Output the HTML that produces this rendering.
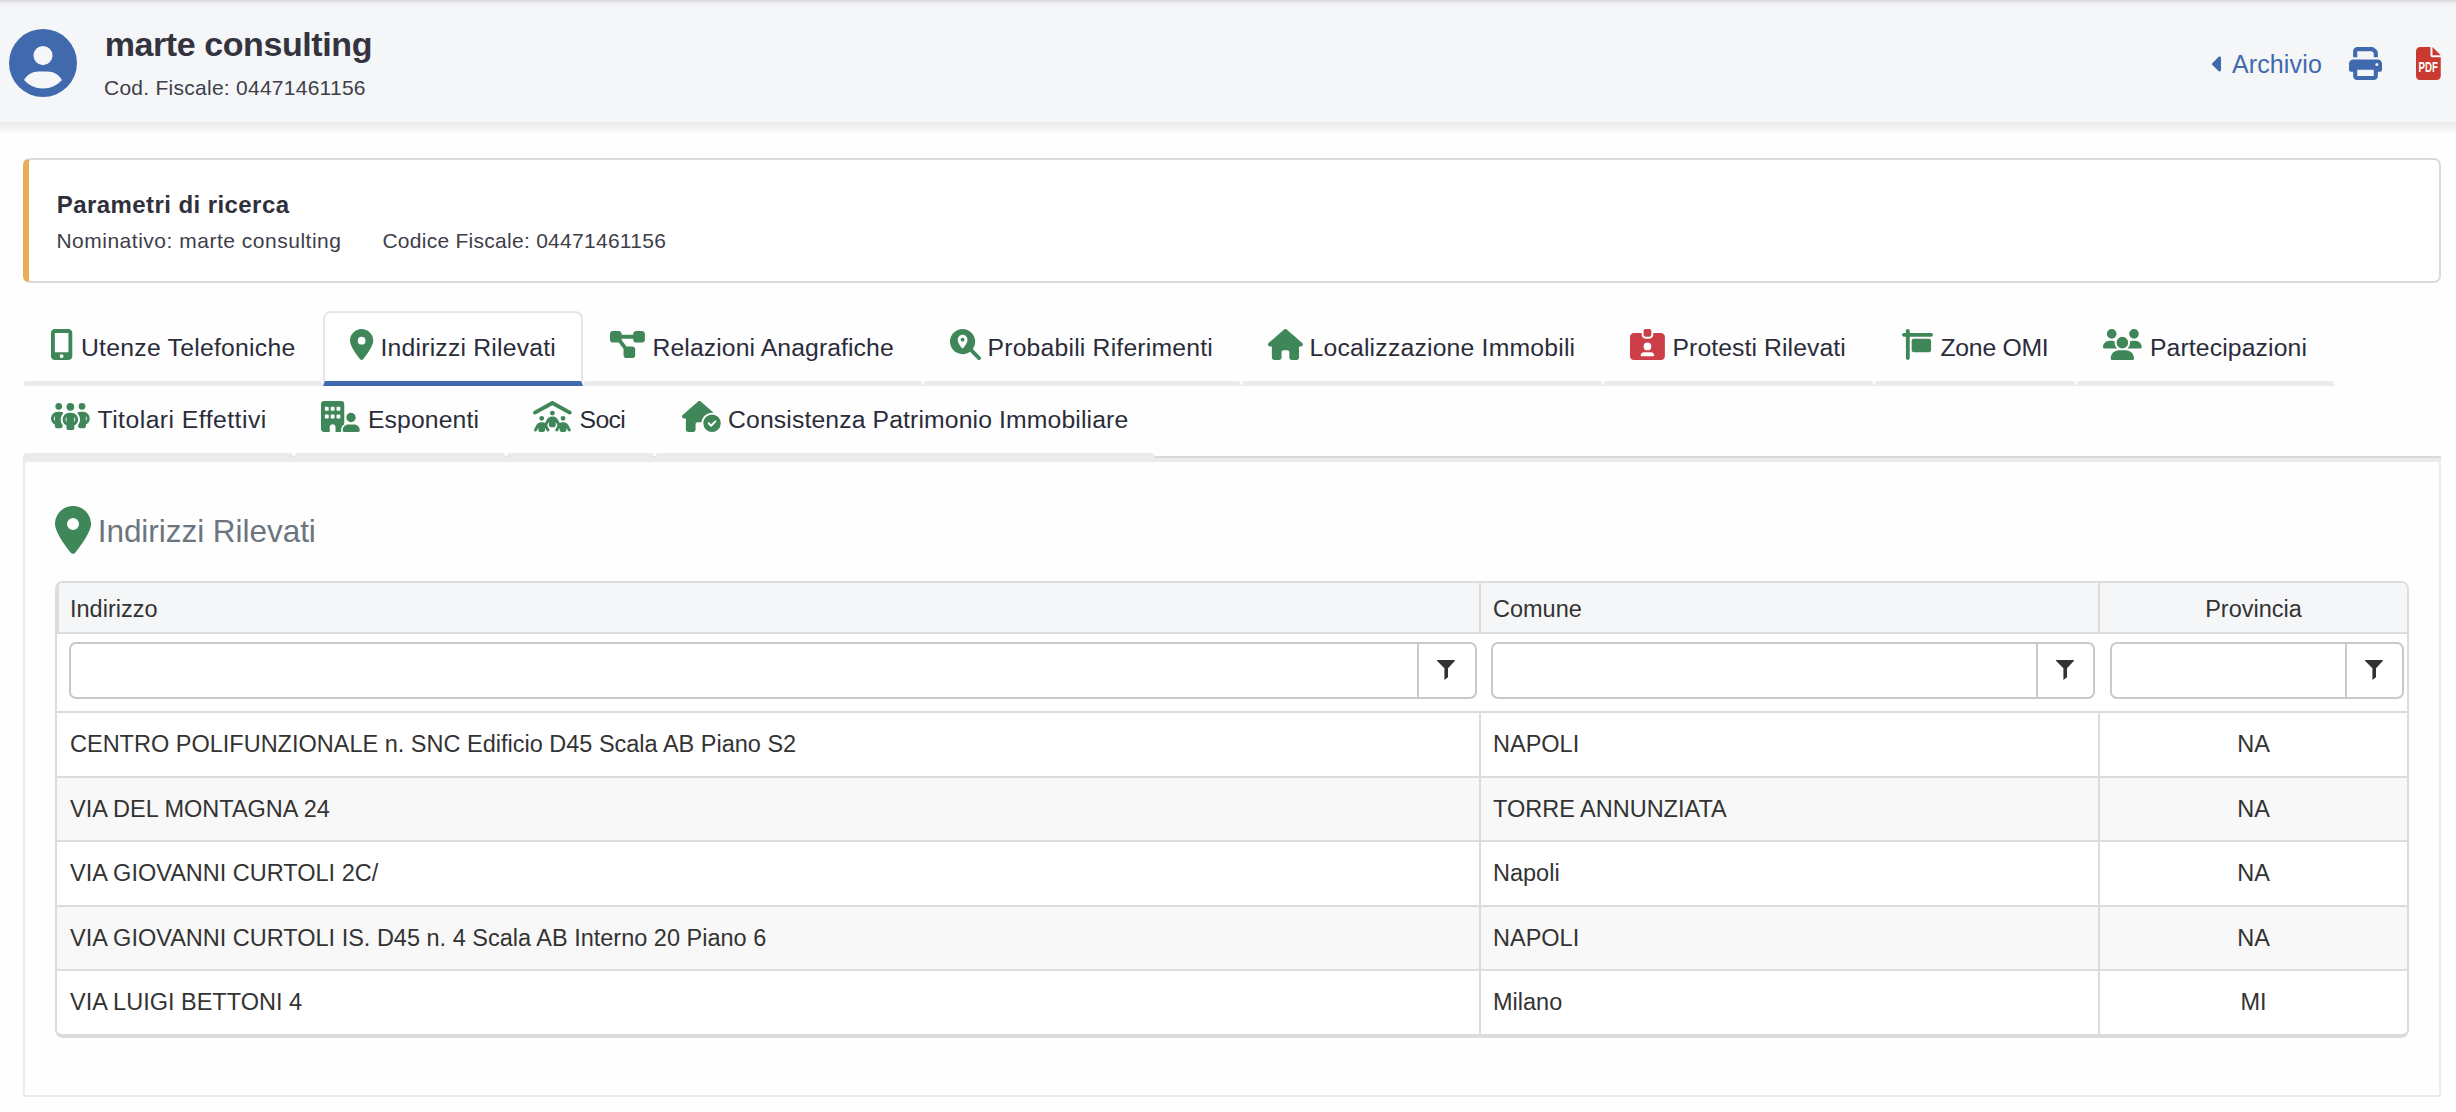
<!DOCTYPE html>
<html><head><meta charset="utf-8"><title>Indirizzi Rilevati</title><style>
*{margin:0;padding:0;box-sizing:border-box}
html,body{width:2456px;height:1112px;overflow:hidden;background:#fefefe;font-family:"Liberation Sans",sans-serif}
.abs,.t,.ic,.hdr,.hdrsh,.card,.tab,.panel,.tbl,.inp{position:absolute}
.t{white-space:nowrap}
.ic{display:block;overflow:visible}
.hdr{left:0;top:0;width:2456px;height:122px;background:linear-gradient(#d7d7d9 0px,#e6e7ea 2px,#eff0f2 4px,#f5f6f8 7px,#f5f6f8 100%)}
.hdrsh{left:0;top:122px;width:2456px;height:12px;background:linear-gradient(#e8e8ea,rgba(253,253,253,0))}
.card{left:23px;top:158px;width:2418px;height:125px;background:#fff;border:2px solid #dadada;border-left:6px solid #e8ad56;border-radius:7px}
.tab{border-bottom:5px solid #ebebeb;border-left:2px solid transparent;border-right:2px solid transparent}
.tab.act{border:2px solid #e6e6e6;border-bottom:5px solid #4169ad;border-radius:8px 8px 0 0;background:#fff}
.panel{left:23px;top:458px;width:2418px;height:639px;border:2px solid #ebebeb;border-top:4px solid #ebebeb}
.tbl{left:55px;top:581px;width:2354px;height:457px;border:2px solid #dcdcdc;border-bottom-width:4px;border-radius:8px;background:#fff}
.inp{border:2px solid #c9c9c9;border-radius:7px;background:#fff}
</style></head>
<body>
<div class="hdr"></div><div class="hdrsh"></div>
<svg class="ic" style="left:9.00px;top:29.00px;width:68.00px;height:68px" viewBox="0 0 512 512"><path fill="#4169ad" d="M399 384.2C376.9 345.8 335.4 320 288 320H224c-47.4 0-88.9 25.8-111 64.2c35.2 39.2 86.2 63.8 143 63.8s107.8-24.7 143-63.8zM0 256a256 256 0 1 1 512 0A256 256 0 1 1 0 256zm256 16a72 72 0 1 0 0-144 72 72 0 1 0 0 144z"/></svg>
<div id="title" class="t " style="left:104.7px;top:27.22px;font-size:34px;line-height:34px;color:#33343f;font-weight:700;letter-spacing:-0.413px;">marte consulting</div>
<div id="cod" class="t " style="left:104.0px;top:77.22px;font-size:21px;line-height:21px;color:#3d3e49;letter-spacing:0.26px;">Cod. Fiscale: 04471461156</div>
<svg class="ic" style="left:2212.00px;top:52.00px;width:12.00px;height:24px" viewBox="0 0 256 512"><path fill="#4169ad" d="M9.4 278.6c-12.5-12.5-12.5-32.8 0-45.3l128-128c9.2-9.2 22.9-11.9 34.9-6.9s19.8 16.6 19.8 29.6l0 256c0 12.9-7.8 24.6-19.8 29.6s-25.7 2.2-34.9-6.9l-128-128z"/></svg>
<div id="arch" class="t " style="left:2231.9px;top:51.84px;font-size:25px;line-height:25px;color:#4169ad;letter-spacing:0.143px;">Archivio</div>
<svg class="ic" style="left:2349.00px;top:47.00px;width:33.00px;height:33px" viewBox="0 0 512 512"><path fill="#4169ad" d="M128 0C92.7 0 64 28.7 64 64v96h64V64H354.7L384 93.3V160h64V93.3c0-17-6.7-33.3-18.7-45.3L400 18.7C388 6.7 371.7 0 354.7 0H128zM384 352v32 64H128V384 368 352H384zm64 32h32c17.7 0 32-14.3 32-32V256c0-35.3-28.7-64-64-64H64c-35.3 0-64 28.7-64 64v96c0 17.7 14.3 32 32 32H64v64c0 35.3 28.7 64 64 64H384c35.3 0 64-28.7 64-64V384zM432 248a24 24 0 1 1 0 48 24 24 0 1 1 0-48z"/></svg>
<svg class="ic" style="left:2416px;top:47px;width:24.75px;height:33px" viewBox="0 0 384 512"><path fill="#c9392f" d="M0 64C0 28.7 28.7 0 64 0H224V128c0 17.7 14.3 32 32 32H384V448c0 35.3-28.7 64-64 64H64c-35.3 0-64-28.7-64-64V64zm384 64H256V0L384 128z"/><text x="190" y="382" fill="#fff" font-family="Liberation Sans" font-weight="700" font-size="225" text-anchor="middle" textLength="300" lengthAdjust="spacingAndGlyphs">PDF</text></svg>
<div class="card"></div>
<div id="param" class="t " style="left:56.7px;top:192.68px;font-size:24px;line-height:24px;color:#2f303c;font-weight:700;letter-spacing:0.431px;">Parametri di ricerca</div>
<div id="nomin" class="t " style="left:56.4px;top:230.22px;font-size:21px;line-height:21px;color:#3d3e49;letter-spacing:0.51px;">Nominativo: marte consulting</div>
<div id="codice" class="t " style="left:382.4px;top:230.22px;font-size:21px;line-height:21px;color:#3d3e49;letter-spacing:0.274px;">Codice Fiscale: 04471461156</div>
<div class="abs" style="left:23px;top:456px;width:2418px;height:2px;background:#d9d9d9"></div>
<div class="tab" style="left:23px;top:311px;width:300px;height:75px"></div>
<svg class="ic" style="left:50.43px;top:329.00px;width:23.25px;height:31px" viewBox="0 0 384 512"><path fill="#3f8659" d="M16 64C16 28.7 44.7 0 80 0H304c35.3 0 64 28.7 64 64V448c0 35.3-28.7 64-64 64H80c-35.3 0-64-28.7-64-64V64zM224 448a32 32 0 1 0 -64 0 32 32 0 1 0 64 0zM304 64H80V384H304V64z"/></svg>
<div id="tab1_0" class="t " style="left:81.0px;top:335.95px;font-size:24.75px;line-height:24.75px;color:#2b2c3a;letter-spacing:0.246px;">Utenze Telefoniche</div>
<div class="tab act" style="left:323px;top:311px;width:260px;height:75px"></div>
<svg class="ic" style="left:350.20px;top:329.00px;width:23.25px;height:31px" viewBox="0 0 384 512"><path fill="#3f8659" d="M215.7 499.2C267 435 384 279.4 384 192C384 86 298 0 192 0S0 86 0 192c0 87.4 117 243 168.3 307.2c12.3 15.3 35.1 15.3 47.4 0zM192 128a64 64 0 1 1 0 128 64 64 0 1 1 0-128z"/></svg>
<div id="tab1_1" class="t " style="left:380.5px;top:335.95px;font-size:24.75px;line-height:24.75px;color:#2b2c3a;letter-spacing:0.199px;">Indirizzi Rilevati</div>
<div class="tab" style="left:583px;top:311px;width:340px;height:75px"></div>
<svg class="ic" style="left:610.40px;top:329.00px;width:34.88px;height:31px" viewBox="0 0 576 512"><path fill="#3f8659" d="M0 80C0 53.5 21.5 32 48 32h96c26.5 0 48 21.5 48 48V96H384V80c0-26.5 21.5-48 48-48h96c26.5 0 48 21.5 48 48v96c0 26.5-21.5 48-48 48H432c-26.5 0-48-21.5-48-48V160H192v16c0 1.7-.1 3.4-.3 5L272 288h96c26.5 0 48 21.5 48 48v96c0 26.5-21.5 48-48 48H272c-26.5 0-48-21.5-48-48V336c0-1.7 .1-3.4 .3-5L144 224H48c-26.5 0-48-21.5-48-48V80z"/></svg>
<div id="tab1_2" class="t " style="left:652.5px;top:335.95px;font-size:24.75px;line-height:24.75px;color:#2b2c3a;letter-spacing:0.09px;">Relazioni Anagrafiche</div>
<div class="tab" style="left:923px;top:311px;width:318px;height:75px"></div>
<svg class="ic" style="left:950.00px;top:329.00px;width:31.00px;height:31px" viewBox="0 0 512 512"><path fill="#3f8659" d="M416 208c0 45.9-14.9 88.3-40 122.7L502.6 457.4c12.5 12.5 12.5 32.8 0 45.3s-32.8 12.5-45.3 0L330.7 376c-34.4 25.2-76.8 40-122.7 40C93.1 416 0 322.9 0 208S93.1 0 208 0S416 93.1 416 208zM288 176c0-44.2-35.8-80-80-80s-80 35.8-80 80c0 48.8 46.5 111.6 68.6 138.6c6 7.3 16.8 7.3 22.7 0c22.1-27 68.6-89.8 68.6-138.6zm-112 0a32 32 0 1 1 64 0 32 32 0 1 1 -64 0z"/></svg>
<div id="tab1_3" class="t " style="left:987.5px;top:335.95px;font-size:24.75px;line-height:24.75px;color:#2b2c3a;letter-spacing:0.19px;">Probabili Riferimenti</div>
<div class="tab" style="left:1241px;top:311px;width:362px;height:75px"></div>
<svg class="ic" style="left:1268.00px;top:329.00px;width:34.88px;height:31px" viewBox="0 0 576 512"><path fill="#3f8659" d="M575.8 255.5c0 18-15 32.1-32 32.1h-32l.7 160.2c0 2.7-.2 5.4-.5 8.1V472c0 22.1-17.9 40-40 40H456c-1.1 0-2.2 0-3.3-.1c-1.4 .1-2.8 .1-4.2 .1H416 392c-22.1 0-40-17.9-40-40V448 384c0-17.7-14.3-32-32-32H256c-17.7 0-32 14.3-32 32v64 24c0 22.1-17.9 40-40 40H160 128.1c-1.5 0-3-.1-4.5-.2c-1.2 .1-2.4 .2-3.6 .2H104c-22.1 0-40-17.9-40-40V360c0-.9 0-1.9 .1-2.8V287.6H32c-18 0-32-14-32-32.1c0-9 3-17 10-24L266.4 8c7-7 15-8 22-8s15 2 21 7L564.8 231.5c8 7 12 15 11 24z"/></svg>
<div id="tab1_4" class="t " style="left:1309.5px;top:335.95px;font-size:24.75px;line-height:24.75px;color:#2b2c3a;letter-spacing:0.191px;">Localizzazione Immobili</div>
<div class="tab" style="left:1603px;top:311px;width:271px;height:75px"></div>
<svg class="ic" style="left:1630.40px;top:329.00px;width:34.88px;height:31px" viewBox="0 0 576 512"><path fill="#cd3f48" d="M256 0h64c17.7 0 32 14.3 32 32V96c0 17.7-14.3 32-32 32H256c-17.7 0-32-14.3-32-32V32c0-17.7 14.3-32 32-32zM64 64H192V96c0 35.3 28.7 64 64 64h64c35.3 0 64-28.7 64-64V64H512c35.3 0 64 28.7 64 64V448c0 35.3-28.7 64-64 64H64c-35.3 0-64-28.7-64-64V128C0 92.7 28.7 64 64 64zM176 437.3c0 5.9 4.8 10.7 10.7 10.7H389.3c5.9 0 10.7-4.8 10.7-10.7c0-29.5-23.9-53.3-53.3-53.3H229.3c-29.5 0-53.3 23.9-53.3 53.3zM288 352a64 64 0 1 0 0-128 64 64 0 1 0 0 128z"/></svg>
<div id="tab1_5" class="t " style="left:1672.5px;top:335.95px;font-size:24.75px;line-height:24.75px;color:#2b2c3a;letter-spacing:0.087px;">Protesti Rilevati</div>
<div class="tab" style="left:1874px;top:311px;width:202px;height:75px"></div>
<svg class="ic" style="left:1901.60px;top:329.00px;width:31.00px;height:31px" viewBox="0 0 512 512"><path fill="#3f8659" d="M96 0c17.7 0 32 14.3 32 32V64l352 0c17.7 0 32 14.3 32 32s-14.3 32-32 32l-352 0V480c0 17.7-14.3 32-32 32s-32-14.3-32-32V128H32C14.3 128 0 113.7 0 96S14.3 64 32 64H64V32C64 14.3 78.3 0 96 0zm96 160H448c17.7 0 32 14.3 32 32V352c0 17.7-14.3 32-32 32H192c-17.7 0-32-14.3-32-32V192c0-17.7 14.3-32 32-32z"/></svg>
<div id="tab1_6" class="t " style="left:1940.5px;top:335.95px;font-size:24.75px;line-height:24.75px;color:#2b2c3a;letter-spacing:-0.257px;">Zone OMI</div>
<div class="tab" style="left:2076px;top:311px;width:259px;height:75px"></div>
<svg class="ic" style="left:2103.40px;top:329.00px;width:38.75px;height:31px" viewBox="0 0 640 512"><path fill="#3f8659" d="M144 0a80 80 0 1 1 0 160A80 80 0 1 1 144 0zM512 0a80 80 0 1 1 0 160A80 80 0 1 1 512 0zM0 298.7C0 239.8 47.8 192 106.7 192h42.7c15.9 0 31 3.5 44.6 9.7c-1.3 7.2-1.9 14.7-1.9 22.3c0 38.2 16.8 72.5 43.3 96c-.2 0-.4 0-.7 0H21.3C9.6 320 0 310.4 0 298.7zM405.3 320c-.2 0-.4 0-.7 0c26.6-23.5 43.3-57.8 43.3-96c0-7.6-.7-15-1.9-22.3c13.6-6.3 28.7-9.7 44.6-9.7h42.7C592.2 192 640 239.8 640 298.7c0 11.8-9.6 21.3-21.3 21.3H405.3zM224 224a96 96 0 1 1 192 0 96 96 0 1 1 -192 0zM128 485.3C128 411.7 187.7 352 261.3 352H378.7C452.3 352 512 411.7 512 485.3c0 14.7-11.9 26.7-26.7 26.7H154.7c-14.7 0-26.7-11.9-26.7-26.7z"/></svg>
<div id="tab1_7" class="t " style="left:2150.0px;top:335.95px;font-size:24.75px;line-height:24.75px;color:#2b2c3a;letter-spacing:0.109px;">Partecipazioni</div>
<div class="tab" style="left:23px;top:386px;width:271px;height:72px"></div>
<svg class="ic" style="left:50.50px;top:401.00px;width:38.75px;height:31px" viewBox="0 0 640 512"><path fill="#3f8659" d="M72 88a56 56 0 1 1 112 0A56 56 0 1 1 72 88zM64 245.7C54 256.9 48 271.8 48 288s6 31.1 16 42.3V245.7zm144.4-49.3C178.7 222.7 160 261.2 160 304c0 34.3 12 65.8 32 90.5V416c0 17.7-14.3 32-32 32H96c-17.7 0-32-14.3-32-32V389.2C26.2 371.2 0 332.7 0 288c0-61.9 50.1-112 112-112h32c24 0 46.2 7.5 64.4 20.3zM448 416V394.5c20-24.7 32-56.2 32-90.5c0-42.8-18.7-81.3-48.4-107.7C449.8 183.5 472 176 496 176h32c61.9 0 112 50.1 112 112c0 44.7-26.2 83.2-64 101.2V416c0 17.7-14.3 32-32 32H480c-17.7 0-32-14.3-32-32zm8-328a56 56 0 1 1 112 0A56 56 0 1 1 456 88zM576 245.7v84.7c10-11.3 16-26.1 16-42.3s-6-31.1-16-42.3zM320 32a64 64 0 1 1 0 128 64 64 0 1 1 0-128zM240 304c0 16.2 6 31 16 42.3V261.7c-10 11.3-16 26.1-16 42.3zm144-42.3v84.7c10-11.3 16-26.1 16-42.3s-6-31.1-16-42.3zM448 304c0 44.7-26.2 83.2-64 101.2V448c0 17.7-14.3 32-32 32H288c-17.7 0-32-14.3-32-32V405.2c-37.8-18-64-56.5-64-101.2c0-61.9 50.1-112 112-112h32c61.9 0 112 50.1 112 112z"/></svg>
<div id="tab2_0" class="t " style="left:97.5px;top:407.95px;font-size:24.75px;line-height:24.75px;color:#2b2c3a;letter-spacing:0.459px;">Titolari Effettivi</div>
<div class="tab" style="left:294px;top:386px;width:212px;height:72px"></div>
<svg class="ic" style="left:321.40px;top:401.00px;width:38.75px;height:31px" viewBox="0 0 640 512"><defs><mask id="bu321"><rect x="0" y="0" width="640" height="512" fill="#fff"/><path fill="#000" d="M330 484C330 418 384 362 452 362H544C612 362 666 418 666 484V540H330Z"/></mask></defs><path fill="#3f8659" fill-rule="evenodd" mask="url(#bu321)" d="M48 0H336C362.5 0 384 21.5 384 48V512H240V432C240 405.5 218.5 384 192 384S144 405.5 144 432V512H48C21.5 512 0 490.5 0 464V48C0 21.5 21.5 0 48 0ZM80 96H112C120.8 96 128 103.2 128 112V144C128 152.8 120.8 160 112 160H80C71.2 160 64 152.8 64 144V112C64 103.2 71.2 96 80 96ZM176 96H208C216.8 96 224 103.2 224 112V144C224 152.8 216.8 160 208 160H176C167.2 160 160 152.8 160 144V112C160 103.2 167.2 96 176 96ZM272 96H304C312.8 96 320 103.2 320 112V144C320 152.8 312.8 160 304 160H272C263.2 160 256 152.8 256 144V112C256 103.2 263.2 96 272 96ZM80 224H112C120.8 224 128 231.2 128 240V272C128 280.8 120.8 288 112 288H80C71.2 288 64 280.8 64 272V240C64 231.2 71.2 224 80 224ZM176 224H208C216.8 224 224 231.2 224 240V272C224 280.8 216.8 288 208 288H176C167.2 288 160 280.8 160 272V240C160 231.2 167.2 224 176 224ZM272 224H304C312.8 224 320 231.2 320 240V272C320 280.8 312.8 288 304 288H272C263.2 288 256 280.8 256 272V240C256 231.2 263.2 224 272 224Z"/><circle cx="496" cy="272" r="78" fill="#3f8659"/><path fill="#3f8659" d="M356 484C356 432 400 388 452 388H544C596 388 640 432 640 484V488C640 501 629 512 616 512H380C367 512 356 501 356 488Z"/></svg>
<div id="tab2_1" class="t " style="left:368.0px;top:407.95px;font-size:24.75px;line-height:24.75px;color:#2b2c3a;letter-spacing:0.1px;">Esponenti</div>
<div class="tab" style="left:506px;top:386px;width:149px;height:72px"></div>
<svg class="ic" style="left:533.00px;top:401.00px;width:38.75px;height:31px" viewBox="0 0 640 512"><path fill="#3f8659" d="M335.5 4l288 160c15.4 8.6 21 28.1 12.4 43.5s-28.1 21-43.5 12.4L320 68.6 47.5 220c-15.4 8.6-34.9 3-43.5-12.4s-3-34.9 12.4-43.5L304.5 4c9.7-5.4 21.4-5.4 31.1 0zM320 160a40 40 0 1 1 0 80 40 40 0 1 1 0-80zM144 246a40 40 0 1 1 0 80 40 40 0 1 1 0-80zm312 40a40 40 0 1 1 80 0 40 40 0 1 1 -80 0zM226.9 491.4L200 441.5V480c0 17.7-14.3 32-32 32H120c-17.7 0-32-14.3-32-32V441.5L61.1 491.4c-6.3 11.7-20.8 16-32.5 9.8s-16-20.8-9.8-32.5l37.9-70.3c15.3-28.5 45.1-46.3 77.5-46.3h19.5c16.3 0 31.9 4.5 45.4 12.6l33.6-62.3c15.3-28.5 45.1-46.3 77.5-46.3h19.5c32.4 0 62.1 17.8 77.5 46.3l33.6 62.3c13.5-8.1 29.1-12.6 45.4-12.6h19.5c32.4 0 62.1 17.8 77.5 46.3l37.9 70.3c6.3 11.7 1.9 26.2-9.8 32.5s-26.2 1.9-32.5-9.8L552 441.5V480c0 17.7-14.3 32-32 32H472c-17.7 0-32-14.3-32-32V441.5l-26.9 49.9c-6.3 11.7-20.8 16-32.5 9.8s-16-20.8-9.8-32.5l36.3-67.5c-1.7-1.7-3.2-3.6-4.3-5.8L376 345.5V400c0 17.7-14.3 32-32 32H296c-17.7 0-32-14.3-32-32V345.5l-26.9 49.9c-1.2 2.2-2.6 4.1-4.3 5.8l36.3 67.5c6.3 11.7 1.9 26.2-9.8 32.5s-26.2 1.9-32.5-9.8z"/></svg>
<div id="tab2_2" class="t " style="left:579.5px;top:407.95px;font-size:24.75px;line-height:24.75px;color:#2b2c3a;letter-spacing:-0.599px;">Soci</div>
<div class="tab" style="left:655px;top:386px;width:500px;height:72px"></div>
<svg class="ic" style="left:682.00px;top:401.00px;width:38.75px;height:31px" viewBox="0 0 640 512"><path fill="#3f8659" d="M320.7 352c8.1-89.7 83.5-160 175.3-160c8.9 0 17.6 .7 26.1 1.9L309.5 7c-6-5-14-7-21-7s-15 1-22 8L10 231.5c-7 7-10 15-10 24c0 18 14 32.1 32 32.1h32v69.7c-.1 .9-.1 1.8-.1 2.8V472c0 22.1 17.9 40 40 40h16c1.2 0 2.4-.1 3.6-.2c1.5 .1 3 .2 4.5 .2H160h24c22.1 0 40-17.9 40-40V448 384c0-17.7 14.3-32 32-32h64l.7 0zM640 368a144 144 0 1 0 -288 0 144 144 0 1 0 288 0zm-76.7-43.3c6.2 6.2 6.2 16.4 0 22.6l-72 72c-6.2 6.2-16.4 6.2-22.6 0l-40-40c-6.2-6.2-6.2-16.4 0-22.6s16.4-6.2 22.6 0L480 385.4l60.7-60.7c6.2-6.2 16.4-6.2 22.6 0z"/></svg>
<div id="tab2_3" class="t " style="left:728.0px;top:407.95px;font-size:24.75px;line-height:24.75px;color:#2b2c3a;letter-spacing:0.121px;">Consistenza Patrimonio Immobiliare</div>
<div class="panel"></div>
<svg class="ic" style="left:54.90px;top:505.90px;width:36.00px;height:48px" viewBox="0 0 384 512"><path fill="#3f8659" d="M215.7 499.2C267 435 384 279.4 384 192C384 86 298 0 192 0S0 86 0 192c0 87.4 117 243 168.3 307.2c12.3 15.3 35.1 15.3 47.4 0zM192 128a64 64 0 1 1 0 128 64 64 0 1 1 0-128z"/></svg>
<div id="sect" class="t " style="left:97.7px;top:515.64px;font-size:31.5px;line-height:31.5px;color:#6c757d;letter-spacing:-0.037px;">Indirizzi Rilevati</div>
<div class="tbl"></div>
<div class="abs" style="left:57px;top:583px;width:2350px;height:49px;background:#f5f6f8;border-radius:6px 6px 0 0"></div>
<div class="abs" style="left:57px;top:632px;width:2350px;height:2px;background:#dcdcdc"></div>
<div class="abs" style="left:1479px;top:583px;width:2px;height:49px;background:#dcdcdc"></div>
<div class="abs" style="left:2098px;top:583px;width:2px;height:49px;background:#dcdcdc"></div>
<div class="t " style="left:70px;top:598.11px;font-size:23.5px;line-height:23.5px;color:#333;">Indirizzo</div>
<div class="abs" style="left:57px;top:583px;width:2px;height:49px;background:#dcdcdc;border-top-left-radius:6px"></div>
<div class="t " style="left:1493px;top:598.11px;font-size:23.5px;line-height:23.5px;color:#333;">Comune</div>
<div class="t" style="left:2053.5px;width:400px;text-align:center;top:598.11px;font-size:23.5px;line-height:23.5px;color:#333;">Provincia</div>
<div class="inp" style="left:69px;top:641.5px;width:1408px;height:57px"></div>
<div class="abs" style="left:1417px;top:642px;width:2px;height:56px;background:#c9c9c9"></div>
<svg class="ic" style="left:1437.0px;top:660px;width:18px;height:20px" viewBox="0 0 18 20"><path fill="#333" d="M0.6 0H17.4C17.9 0 18.1 0.5 17.8 0.9L11 8.2V17.2L7.4 20V8.2L0.2 0.9C-0.1 0.5 0.1 0 0.6 0Z"/></svg>
<div class="inp" style="left:1491px;top:641.5px;width:604px;height:57px"></div>
<div class="abs" style="left:2036px;top:642px;width:2px;height:56px;background:#c9c9c9"></div>
<svg class="ic" style="left:2056.0px;top:660px;width:18px;height:20px" viewBox="0 0 18 20"><path fill="#333" d="M0.6 0H17.4C17.9 0 18.1 0.5 17.8 0.9L11 8.2V17.2L7.4 20V8.2L0.2 0.9C-0.1 0.5 0.1 0 0.6 0Z"/></svg>
<div class="inp" style="left:2110px;top:641.5px;width:294px;height:57px"></div>
<div class="abs" style="left:2345px;top:642px;width:2px;height:56px;background:#c9c9c9"></div>
<svg class="ic" style="left:2365.0px;top:660px;width:18px;height:20px" viewBox="0 0 18 20"><path fill="#333" d="M0.6 0H17.4C17.9 0 18.1 0.5 17.8 0.9L11 8.2V17.2L7.4 20V8.2L0.2 0.9C-0.1 0.5 0.1 0 0.6 0Z"/></svg>
<div class="abs" style="left:57px;top:711px;width:2350px;height:2px;background:#dcdcdc"></div>
<div class="abs" style="left:57px;top:713px;width:2350px;height:63px;background:#ffffff;"></div>
<div class="abs" style="left:1479px;top:713px;width:2px;height:63px;background:#dcdcdc"></div>
<div class="abs" style="left:2098px;top:713px;width:2px;height:63px;background:#dcdcdc"></div>
<div class="t " style="left:70px;top:733.11px;font-size:23.5px;line-height:23.5px;color:#333;">CENTRO POLIFUNZIONALE n. SNC Edificio D45 Scala AB Piano S2</div>
<div class="t " style="left:1493px;top:733.11px;font-size:23.5px;line-height:23.5px;color:#333;">NAPOLI</div>
<div class="t" style="left:2053.5px;width:400px;text-align:center;top:733.11px;font-size:23.5px;line-height:23.5px;color:#333;">NA</div>
<div class="abs" style="left:57px;top:776px;width:2350px;height:2px;background:#dcdcdc"></div>
<div class="abs" style="left:57px;top:778px;width:2350px;height:62px;background:#f8f8f8;"></div>
<div class="abs" style="left:1479px;top:778px;width:2px;height:62px;background:#dcdcdc"></div>
<div class="abs" style="left:2098px;top:778px;width:2px;height:62px;background:#dcdcdc"></div>
<div class="t " style="left:70px;top:798.11px;font-size:23.5px;line-height:23.5px;color:#333;">VIA DEL MONTAGNA 24</div>
<div class="t " style="left:1493px;top:798.11px;font-size:23.5px;line-height:23.5px;color:#333;">TORRE ANNUNZIATA</div>
<div class="t" style="left:2053.5px;width:400px;text-align:center;top:798.11px;font-size:23.5px;line-height:23.5px;color:#333;">NA</div>
<div class="abs" style="left:57px;top:840px;width:2350px;height:2px;background:#dcdcdc"></div>
<div class="abs" style="left:57px;top:842px;width:2350px;height:63px;background:#ffffff;"></div>
<div class="abs" style="left:1479px;top:842px;width:2px;height:63px;background:#dcdcdc"></div>
<div class="abs" style="left:2098px;top:842px;width:2px;height:63px;background:#dcdcdc"></div>
<div class="t " style="left:70px;top:862.11px;font-size:23.5px;line-height:23.5px;color:#333;">VIA GIOVANNI CURTOLI 2C/</div>
<div class="t " style="left:1493px;top:862.11px;font-size:23.5px;line-height:23.5px;color:#333;">Napoli</div>
<div class="t" style="left:2053.5px;width:400px;text-align:center;top:862.11px;font-size:23.5px;line-height:23.5px;color:#333;">NA</div>
<div class="abs" style="left:57px;top:905px;width:2350px;height:2px;background:#dcdcdc"></div>
<div class="abs" style="left:57px;top:907px;width:2350px;height:62px;background:#f8f8f8;"></div>
<div class="abs" style="left:1479px;top:907px;width:2px;height:62px;background:#dcdcdc"></div>
<div class="abs" style="left:2098px;top:907px;width:2px;height:62px;background:#dcdcdc"></div>
<div class="t " style="left:70px;top:927.11px;font-size:23.5px;line-height:23.5px;color:#333;">VIA GIOVANNI CURTOLI IS. D45 n. 4 Scala AB Interno 20 Piano 6</div>
<div class="t " style="left:1493px;top:927.11px;font-size:23.5px;line-height:23.5px;color:#333;">NAPOLI</div>
<div class="t" style="left:2053.5px;width:400px;text-align:center;top:927.11px;font-size:23.5px;line-height:23.5px;color:#333;">NA</div>
<div class="abs" style="left:57px;top:969px;width:2350px;height:2px;background:#dcdcdc"></div>
<div class="abs" style="left:57px;top:971px;width:2350px;height:63px;background:#ffffff;border-radius:0 0 6px 6px;"></div>
<div class="abs" style="left:1479px;top:971px;width:2px;height:63px;background:#dcdcdc"></div>
<div class="abs" style="left:2098px;top:971px;width:2px;height:63px;background:#dcdcdc"></div>
<div class="t " style="left:70px;top:991.11px;font-size:23.5px;line-height:23.5px;color:#333;">VIA LUIGI BETTONI 4</div>
<div class="t " style="left:1493px;top:991.11px;font-size:23.5px;line-height:23.5px;color:#333;">Milano</div>
<div class="t" style="left:2053.5px;width:400px;text-align:center;top:991.11px;font-size:23.5px;line-height:23.5px;color:#333;">MI</div>

</body></html>
